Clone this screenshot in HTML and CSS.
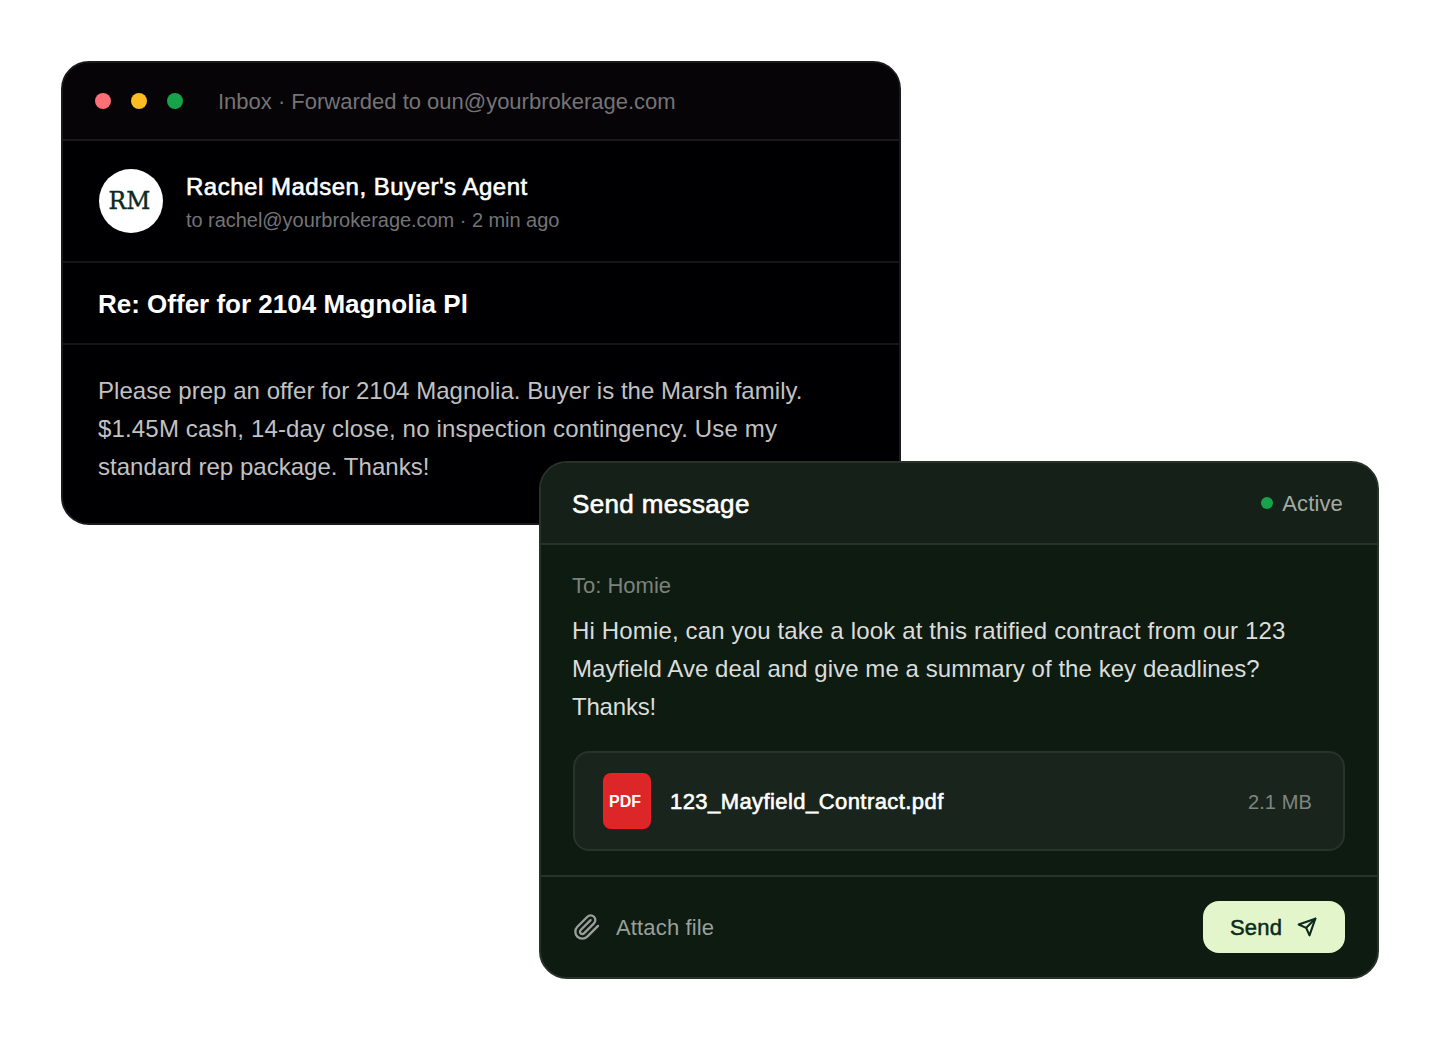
FILE: index.html
```html
<!DOCTYPE html>
<html lang="en">
<head>
<meta charset="utf-8">
<title>Inbox and message</title>
<link rel="stylesheet" href="styles.css">
</head>
<body>
<main class="stage">
  <section class="card email">
    <header class="email-bar">
      <div class="lights"><i class="light red"></i><i class="light amber"></i><i class="light green"></i></div>
      <span class="bar-title">Inbox · Forwarded to oun@yourbrokerage.com</span>
    </header>
    <div class="sender">
      <div class="avatar">RM</div>
      <div class="sender-text">
        <div class="sender-name">Rachel Madsen, Buyer's Agent</div>
        <div class="sender-meta">to rachel@yourbrokerage.com · 2 min ago</div>
      </div>
    </div>
    <h2 class="subject">Re: Offer for 2104 Magnolia Pl</h2>
    <p class="email-body">Please prep an offer for 2104 Magnolia. Buyer is the Marsh family.<br><span class="wide">$1.45M cash, 14-day close, no inspection contingency. Use my</span><br>standard rep package. Thanks!</p>
  </section>

  <section class="card message">
    <header class="message-bar">
      <h2 class="message-title">Send message</h2>
      <div class="status"><i class="status-dot"></i><span>Active</span></div>
    </header>
    <div class="message-main">
      <div class="recipient">To: Homie</div>
      <p class="message-body"><span class="wide">Hi Homie, can you take a look at this ratified contract from our 123</span><br>Mayfield Ave deal and give me a summary of the key deadlines?<br><span class="tight">Thanks!</span></p>
      <div class="attachment">
        <div class="pdf">PDF</div>
        <div class="file-name">123_Mayfield_Contract.pdf</div>
        <div class="file-size">2.1 MB</div>
      </div>
    </div>
    <footer class="message-foot">
      <div class="attach">
        <svg width="28" height="28" viewBox="0 0 24 24" fill="none" stroke="currentColor" stroke-width="2" stroke-linecap="round" stroke-linejoin="round"><path d="m21.44 11.05-9.19 9.19a6 6 0 0 1-8.49-8.49l8.57-8.57A4 4 0 1 1 18 8.84l-8.59 8.57a2 2 0 0 1-2.83-2.83l8.49-8.48"/></svg>
        <span class="attach-label">Attach file</span>
      </div>
      <button class="send"><span class="send-label">Send</span>
        <svg width="20" height="20" viewBox="0 0 24 24" fill="none" stroke="currentColor" stroke-width="2.5" stroke-linecap="round" stroke-linejoin="round"><path d="m22 2-7 20-4-9-9-4Z"/><path d="M22 2 11 13"/></svg>
      </button>
    </footer>
  </section>
</main>
</body>
</html>
```
FILE: styles.css
```css
* { box-sizing: border-box; margin: 0; }
body { background: #fff; font-family: "Liberation Sans", Arial, sans-serif; }
.stage { display: grid; width: 1438px; height: 1058px; align-items: start; justify-items: start; }
.card { grid-area: 1 / 1; width: 840px; border: 2px solid; border-radius: 28px; overflow: hidden; }

.email { margin: 61px 0 0 61px; height: 464px; background: #000002; border-color: #1a1a1c; }
.email-bar { display: flex; align-items: center; gap: 35px; height: 78px; padding: 0 32px; background: #060407; border-bottom: 2px solid #1a191c; }
.lights { display: flex; gap: 20px; }
.light { width: 16px; height: 16px; border-radius: 50%; }
.red { background: #fb7074; }
.amber { background: #fdbb24; }
.green { background: #17a34a; }
.bar-title { padding-top: 2px; font-size: 22px; line-height: 30px; color: #747376; }
.sender { display: flex; align-items: center; gap: 23px; height: 122px; padding: 0 36px; border-bottom: 2px solid #151517; }
.avatar { width: 64px; height: 64px; padding-right: 3px; border-radius: 50%; background: #fff; color: #0b2b1d; font: 23.5px/65px "DejaVu Serif", serif; text-align: center; -webkit-text-stroke: 0.4px; }
.sender-text { padding-top: 4px; }
.sender-name { font-size: 24px; line-height: 34px; letter-spacing: 0.51px; color: #fff; -webkit-text-stroke: 0.6px; }
.sender-meta { font-size: 20px; line-height: 32px; letter-spacing: -0.04px; color: #747476; }
.subject { height: 82px; padding: 0 35px; border-bottom: 2px solid #151517; font-size: 26px; line-height: 82px; color: #fff; }
.email-body { padding: 27px 35px; font-size: 24px; line-height: 38px; letter-spacing: 0.035px; color: #c2c2c3; white-space: nowrap; }
.wide { letter-spacing: 0.165px; }

.message { margin: 461px 0 0 539px; height: 518px; background: #0e1b11; border-color: #27322a; }
.message-bar { display: flex; align-items: center; justify-content: space-between; height: 82px; padding: 2px 34px 0 31px; background: #142018; border-bottom: 2px solid #27322a; }
.message-title { font-size: 26px; line-height: 34px; font-weight: 400; letter-spacing: 0.36px; color: #fff; -webkit-text-stroke: 0.6px; }
.status { display: flex; align-items: center; gap: 9px; font-size: 22px; line-height: 30px; letter-spacing: 0.15px; color: #a4aaa5; }
.status-dot { width: 12px; height: 12px; margin-bottom: 2px; border-radius: 50%; background: #17a34a; }
.message-main { height: 332px; padding: 26px 32px 0 31px; border-bottom: 2px solid #27322a; }
.recipient { font-size: 22px; line-height: 30px; color: #7b827d; }
.message-body { margin-top: 11px; font-size: 24px; line-height: 38px; letter-spacing: 0.06px; color: #dbdddb; white-space: nowrap; }
.message-body .wide { letter-spacing: 0.155px; }
.message-body .tight { letter-spacing: -0.2px; }
.attachment { display: flex; align-items: center; height: 100px; width: 772px; margin: 25px 0 0 1px; padding: 0 31px 0 28px; border: 2px solid #28332b; border-radius: 16px; background: #19251c; }
.pdf { width: 48px; height: 56px; padding-right: 4px; border: 2px solid #ec2126; border-radius: 8px; background: #dc2628; color: #fff; font-size: 16px; line-height: 53px; font-weight: 700; text-align: center; }
.file-name { flex: 1; margin-left: 19px; padding-top: 2px; font-size: 22px; line-height: 30px; letter-spacing: 0.43px; color: #fff; -webkit-text-stroke: 0.6px; }
.file-size { padding-top: 2px; font-size: 20px; line-height: 30px; letter-spacing: 0.12px; color: #7f8680; }
.message-foot { display: flex; align-items: center; justify-content: space-between; height: 100px; padding: 0 32px; }
.attach { display: flex; align-items: center; gap: 15px; font-size: 22px; line-height: 30px; letter-spacing: 0.15px; color: #999f9a; }
.attach-label, .send-label { padding-top: 2px; }
.send { display: flex; align-items: center; justify-content: space-between; width: 142px; height: 52px; padding: 0 28px 0 27px; border: 0; border-radius: 16px; background: #e3f6cb; color: #0b2b1d; font: 22px/30px "Liberation Sans", Arial, sans-serif; letter-spacing: 0.2px; -webkit-text-stroke: 0.5px; }
```
